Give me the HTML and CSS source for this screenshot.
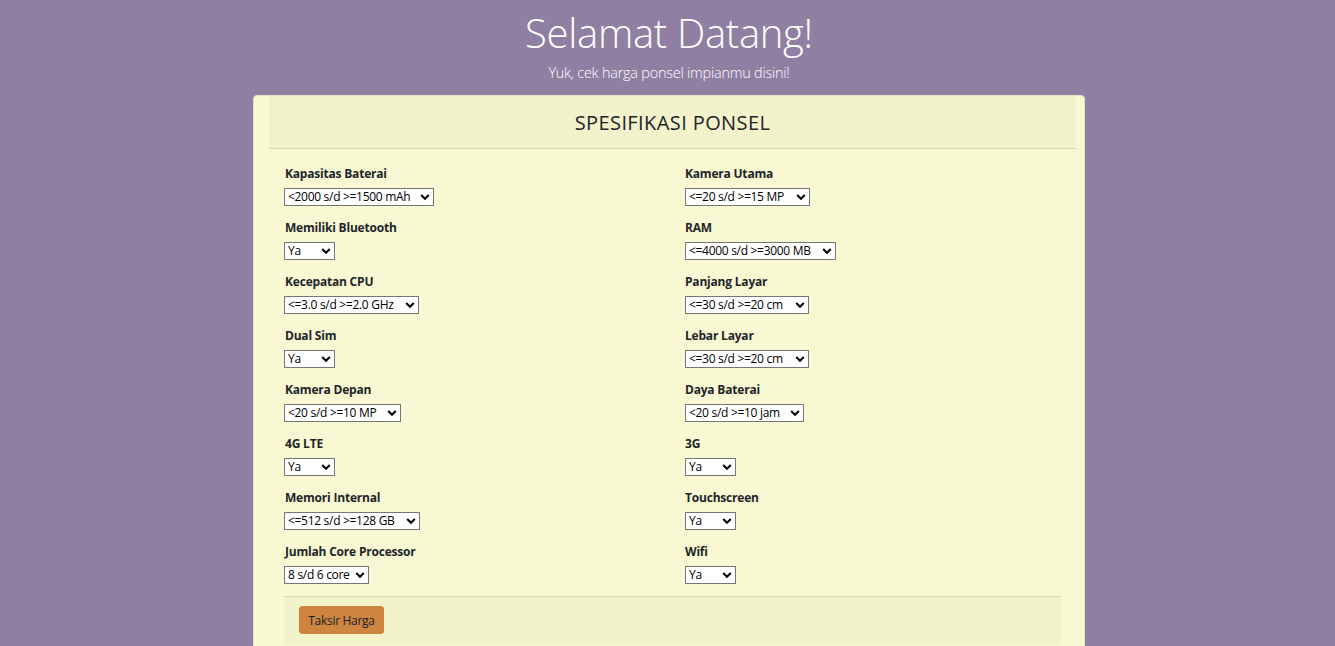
FILE: index.html
```html
<!DOCTYPE html>
<html lang="id">
<head>
<meta charset="utf-8">
<title>Taksir Harga Ponsel</title>
<link rel="stylesheet" href="styles.css">
</head>
<body>
<div class="page">
  <h1 class="title">Selamat Datang!</h1>
  <p class="subtitle">Yuk, cek harga ponsel impianmu disini!</p>
  <form class="card">
    <div class="card-header">SPESIFIKASI PONSEL</div>
    <div class="card-body">
      <div class="field"><label>Kapasitas Baterai</label><select class="w150"><option>&lt;2000 s/d &gt;=1500 mAh</option></select></div>
      <div class="field"><label>Kamera Utama</label><select class="w125"><option>&lt;=20 s/d &gt;=15 MP</option></select></div>
      <div class="field"><label>Memiliki Bluetooth</label><select class="w51"><option>Ya</option><option>Tidak</option></select></div>
      <div class="field"><label>RAM</label><select class="w151"><option>&lt;=4000 s/d &gt;=3000 MB</option></select></div>
      <div class="field"><label>Kecepatan CPU</label><select class="w135"><option>&lt;=3.0 s/d &gt;=2.0 GHz</option></select></div>
      <div class="field"><label>Panjang Layar</label><select class="w124"><option>&lt;=30 s/d &gt;=20 cm</option></select></div>
      <div class="field"><label>Dual Sim</label><select class="w51"><option>Ya</option><option>Tidak</option></select></div>
      <div class="field"><label>Lebar Layar</label><select class="w124"><option>&lt;=30 s/d &gt;=20 cm</option></select></div>
      <div class="field"><label>Kamera Depan</label><select class="w117"><option>&lt;20 s/d &gt;=10 MP</option></select></div>
      <div class="field"><label>Daya Baterai</label><select class="w119"><option>&lt;20 s/d &gt;=10 jam</option></select></div>
      <div class="field"><label>4G LTE</label><select class="w51"><option>Ya</option><option>Tidak</option></select></div>
      <div class="field"><label>3G</label><select class="w51"><option>Ya</option><option>Tidak</option></select></div>
      <div class="field"><label>Memori Internal</label><select class="w136"><option>&lt;=512 s/d &gt;=128 GB</option></select></div>
      <div class="field"><label>Touchscreen</label><select class="w51"><option>Ya</option><option>Tidak</option></select></div>
      <div class="field"><label>Jumlah Core Processor</label><select class="w85"><option>8 s/d 6 core</option></select></div>
      <div class="field"><label>Wifi</label><select class="w51"><option>Ya</option><option>Tidak</option></select></div>
    </div>
    <div class="card-footer"><button type="button" class="btn">Taksir Harga</button></div>
  </form>
</div>
</body>
</html>
```
FILE: styles.css
```css
* { box-sizing: border-box; }
html, body { margin: 0; padding: 0; }
body {
  background: #8f7fa3;
  font-family: "Open Sans", "Noto Sans", "Liberation Sans", sans-serif;
  color: #212529;
  height: 646px;
  overflow: hidden;
}
.page {
  display: flex;
  flex-direction: column;
  align-items: center;
  padding-left: 3px;
}
.title {
  margin: 6px 0 0;
  font-weight: 300;
  font-size: 40px;
  line-height: 54px;
  color: #ffffff;
  letter-spacing: -0.3px;
}
.subtitle {
  margin: 3px 0 0;
  font-weight: 300;
  font-size: 14.4px;
  line-height: 20px;
  color: #ffffff;
  letter-spacing: -0.2px;
}
.card {
  margin-top: 12px;
  width: 832px;
  background: #f8f8d2;
  border: 1px solid #e6e6c6;
  border-radius: 4px;
  display: flex;
  flex-direction: column;
  padding-bottom: 12px;
}
.card-header {
  margin: 0 8px 0 15px;
  height: 53px;
  background: #f2f2cb;
  border-bottom: 1px solid #d6d6b8;
  display: flex;
  align-items: center;
  justify-content: center;
  font-size: 20px;
  font-weight: 500;
  letter-spacing: 0.4px;
  color: #212529;
}
.card-body {
  padding: 15px 0 0 31px;
  display: grid;
  grid-template-columns: 400px 400px;
  row-gap: 12px;
}
.field {
  display: flex;
  flex-direction: column;
  align-items: flex-start;
}
.field label {
  font-size: 12px;
  font-weight: 700;
  line-height: 18px;
  padding-top: 1px;
  margin-bottom: 5px;
  letter-spacing: -0.2px;
}
.field select {
  -webkit-appearance: none;
  appearance: none;
  height: 18px;
  font-family: "Open Sans", "Noto Sans", sans-serif;
  font-size: 12px;
  line-height: 16px;
  color: #000;
  background-color: #fff;
  background-image: url("data:image/svg+xml,%3Csvg xmlns='http://www.w3.org/2000/svg' width='10' height='8' viewBox='0 0 10 8'%3E%3Cpath d='M1.2 2 L5 5.8 L8.8 2' fill='none' stroke='%23000' stroke-width='2'/%3E%3C/svg%3E");
  background-repeat: no-repeat;
  background-position: right 3px center;
  background-size: 10px 8px;
  border: 1px solid #767676;
  border-radius: 0;
  padding: 0 14px 0 3px;
  letter-spacing: -0.3px;
}
.field:nth-child(odd) select { margin-left: -1px; }
.w51 { width: 51px; }
.w85 { width: 85px; }
.w117 { width: 117px; }
.w119 { width: 119px; }
.w124 { width: 124px; }
.w125 { width: 125px; }
.w135 { width: 135px; }
.w136 { width: 136px; }
.w150 { width: 150px; }
.w151 { width: 151px; }
.card-footer {
  margin: 12px 23px 0 30px;
  background: #f2f2cb;
  border-top: 1px solid #d6d6b8;
  padding: 9px 15px 11px;
  border-radius: 0 0 3px 3px;
}
.btn {
  background: #cd853f;
  border: 1px solid #cd853f;
  border-radius: 3px;
  color: #212529;
  font-family: "Open Sans", "Noto Sans", sans-serif;
  font-size: 12px;
  font-weight: 400;
  height: 28px;
  width: 85px;
  padding: 0;
  letter-spacing: -0.3px;
}
```
